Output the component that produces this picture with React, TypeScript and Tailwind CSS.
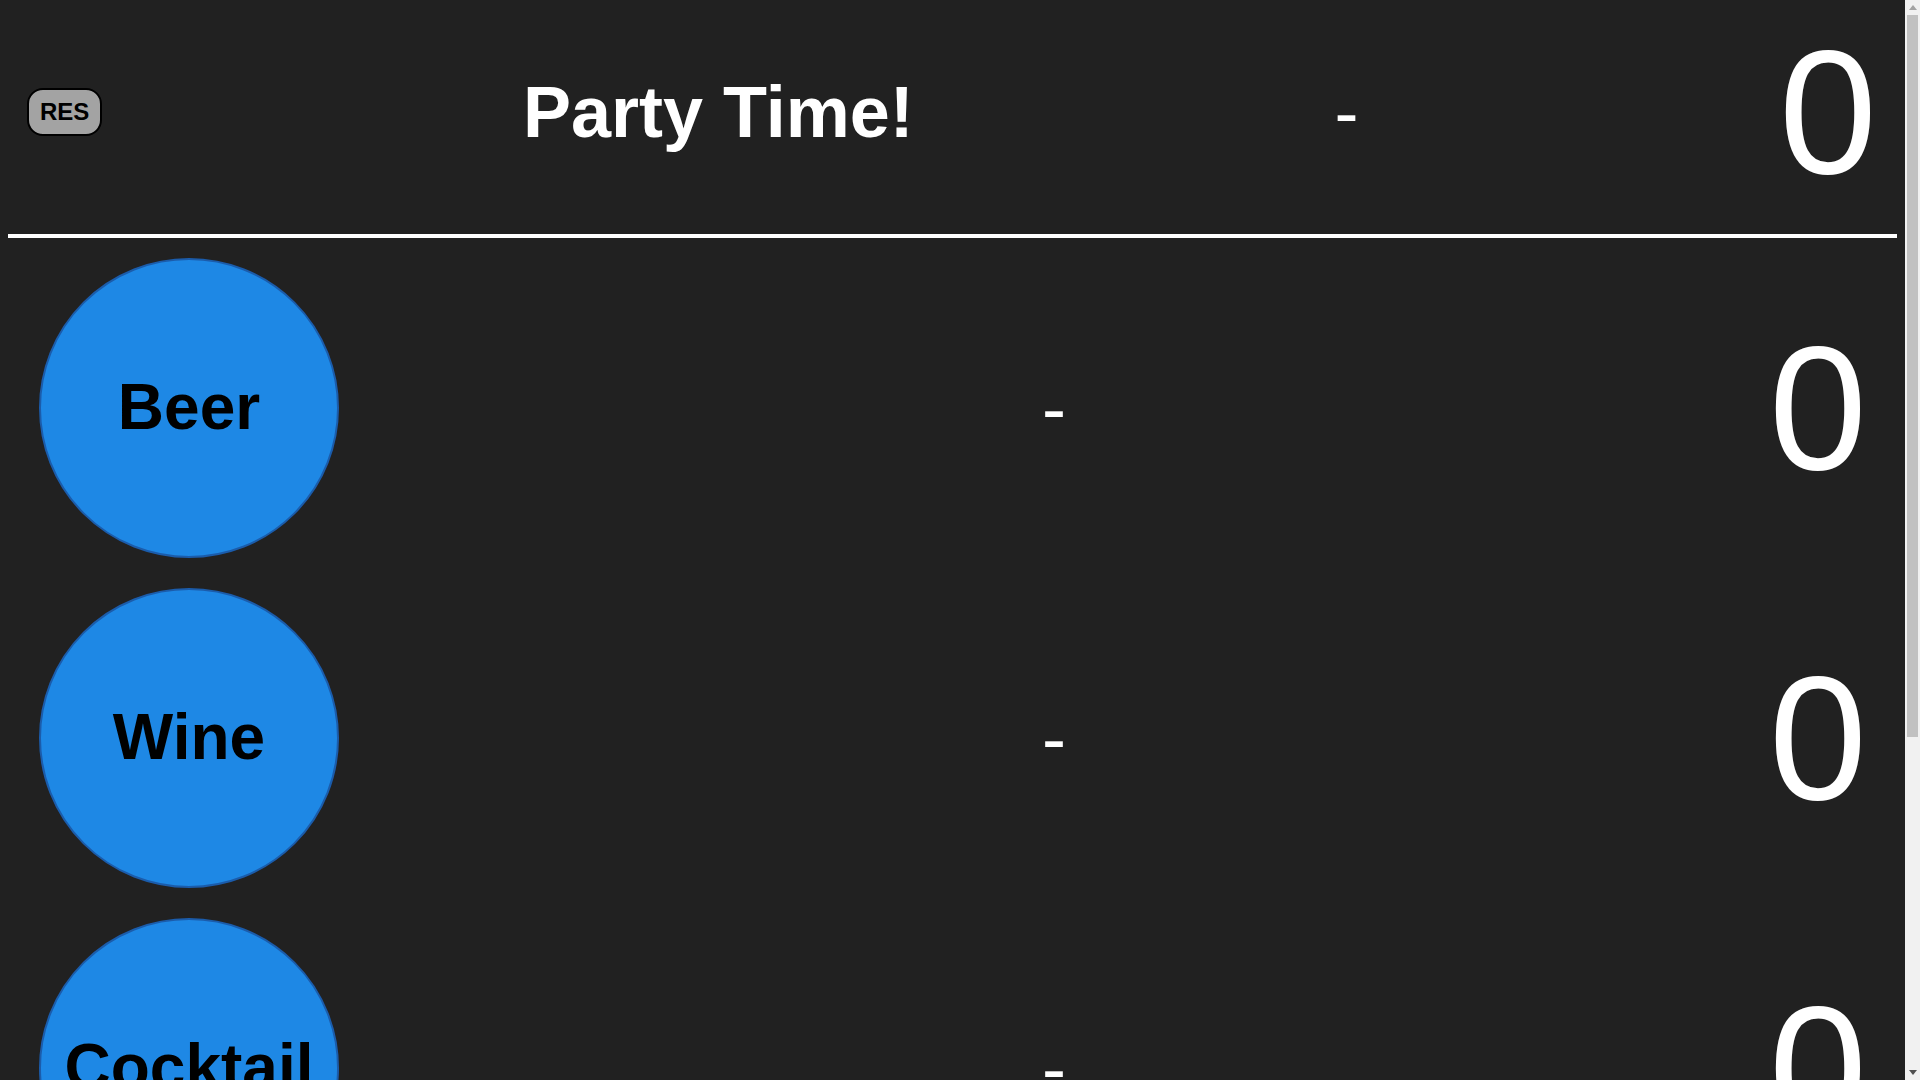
const drinks = ["Beer", "Wine", "Cocktail", "Shot"];

function DrinkRow({ name }: { name: string }) {
  return (
    <div className="flex items-center justify-between pl-[39px] pr-[38px]">
      <button
        type="button"
        className="flex h-[300px] w-[300px] items-center justify-center rounded-full border-2 border-[#1b5cab] bg-[#1e88e5] text-[64px] leading-[1.15] font-bold text-black"
      >
        {name}
      </button>
      <span className="text-[72px] leading-[1.15] text-white">-</span>
      <span className="text-[176px] leading-[1.15] text-white">0</span>
    </div>
  );
}

function ScrollBar() {
  return (
    <div className="flex h-screen w-[15px] shrink-0 flex-col bg-[#f1f1f1]">
      <div className="flex h-[15px] items-center justify-center">
        <svg width="8" height="5" viewBox="0 0 8 5">
          <path d="M4 0 L8 5 L0 5 Z" fill="#a3a3a3" />
        </svg>
      </div>
      <div className="flex-1 px-[2px]">
        <div className="h-[722px] bg-[#c1c1c1]" />
      </div>
      <div className="flex h-[15px] items-center justify-center">
        <svg width="8" height="5" viewBox="0 0 8 5">
          <path d="M0 0 L8 0 L4 5 Z" fill="#505050" />
        </svg>
      </div>
    </div>
  );
}

export default function App() {
  return (
    <div className="flex h-screen overflow-hidden bg-[#212121] font-['Liberation_Sans',Arial,sans-serif]">
      <div className="flex-1 overflow-y-auto pb-[20px] [scrollbar-width:none]">
        <div className="flex h-[224px] items-center justify-between pl-[27px] pr-[28px]">
          <button
            type="button"
            className="rounded-2xl border-2 border-black bg-[#a3a3a3] px-[11px] py-2 text-[24px] leading-[1.15] font-bold text-black"
          >
            RES
          </button>
          <h1 className="text-[72px] leading-[1.15] font-bold text-white">Party Time!</h1>
          <span className="text-[72px] leading-[1.15] text-white">-</span>
          <span className="text-[176px] leading-[1.15] text-white">0</span>
        </div>
        <div className="mx-2 mt-[10px] h-[4px] bg-white" />
        <div className="flex flex-col gap-[30px] pt-[20px]">
          {drinks.map((d) => (
            <DrinkRow key={d} name={d} />
          ))}
        </div>
      </div>
      <ScrollBar />
    </div>
  );
}
